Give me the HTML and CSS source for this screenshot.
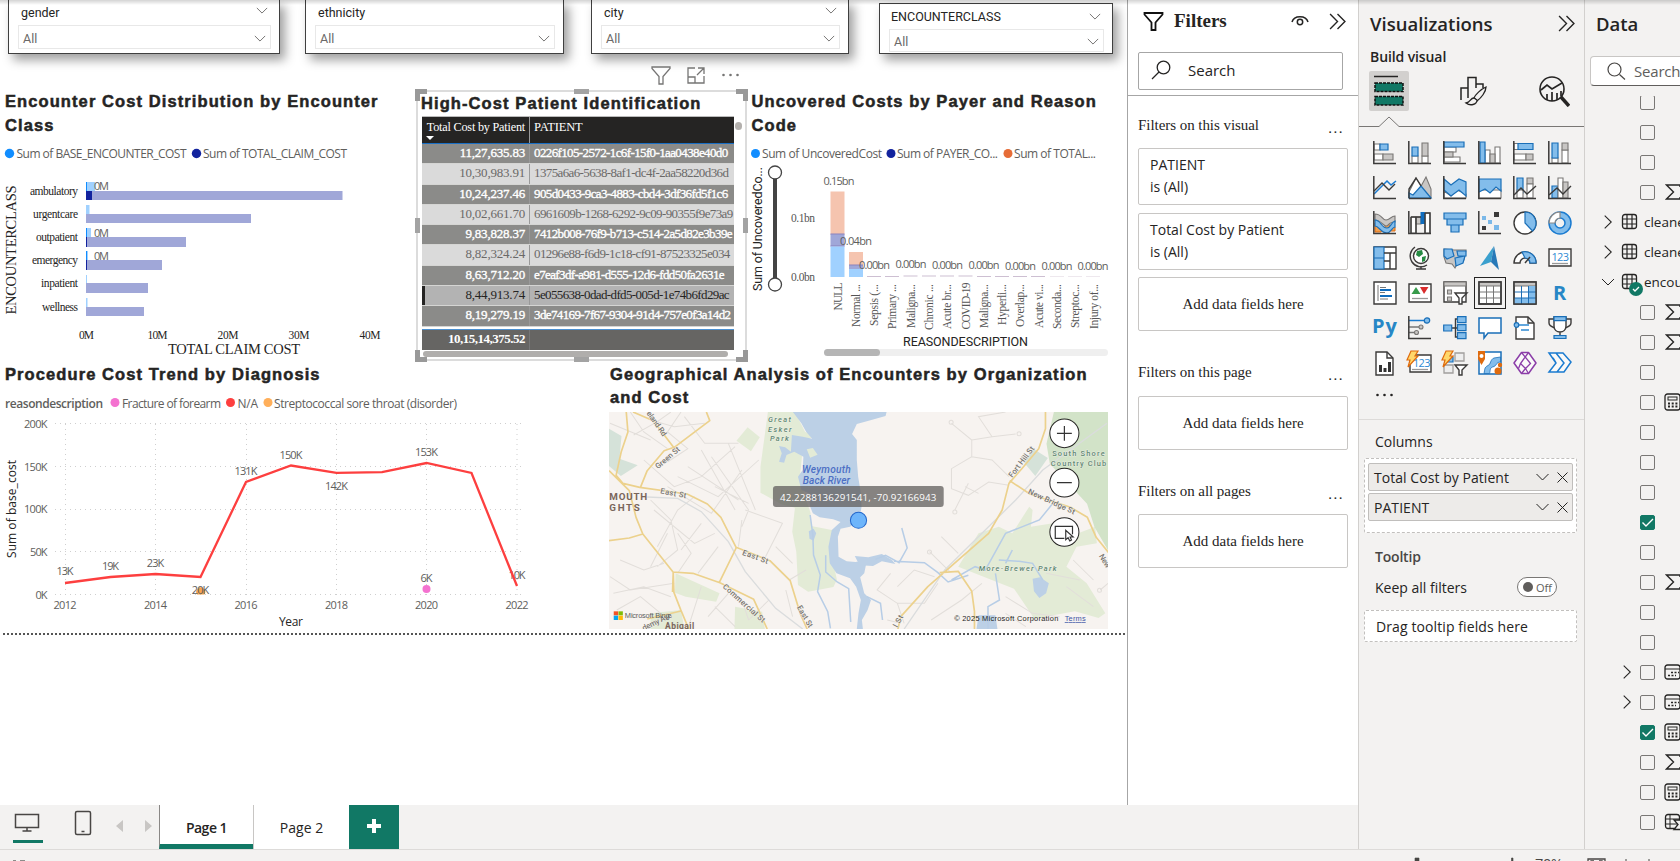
FILE: index.html
```html
<!DOCTYPE html>
<html lang="en">
<head>
<meta charset="utf-8">
<title>Report editor</title>
<link rel="stylesheet" href="styles.css">
</head>
<body>
<svg class="defs" width="0" height="0">
  <defs>
    <symbol id="chev" viewBox="0 0 14 8"><path d="M1 1l6 6 6-6" fill="none" stroke="currentColor"/></symbol>
    <symbol id="axes" viewBox="0 0 24 24"><path d="M.8 0v22.4H23" fill="none" stroke="#3b3a39" stroke-width="1.5"/></symbol>
    <symbol id="more" viewBox="0 0 20 4"><circle cx="2.5" cy="2" r="1.3"/><circle cx="9.5" cy="2" r="1.3"/><circle cx="16.500" cy="2" r="1.300"/></symbol>
    <symbol id="dbl" viewBox="0 0 16 16"><path d="M1 1l7 7-7 7M8 1l7 7-7 7" fill="none" stroke="#252423" stroke-width="1.3"/></symbol>
    <symbol id="funnel" viewBox="0 0 20 19"><path d="M1 1h18v1.500l-7 8v7.500H8v-7.500l-7-8z" fill="none" stroke="currentColor" stroke-width="var(--w)"/></symbol>
    <symbol id="sigma" viewBox="0 0 16 16"><path d="M15 3V1H1.500l7 7-7 7H15v-2" fill="none" stroke="#252423" stroke-width="1.400"/></symbol>
    <symbol id="calc" viewBox="0 0 18 18"><rect x="1" y="1" width="15" height="16" rx="2.500" fill="none" stroke="#252423" stroke-width="1.300"/><rect x="4" y="4" width="9" height="3" fill="none" stroke="#252423"/><path d="M4 10.500h10M4 13.500h10" stroke="#252423" stroke-width="1.800" stroke-dasharray="2 1.700"/></symbol>
    <symbol id="cal" viewBox="0 0 18 18"><rect x="1" y="2" width="15" height="14" rx="2.500" fill="none" stroke="#252423" stroke-width="1.300"/><path d="M1 6h15" stroke="#252423"/><path d="M7 9.500h8M4 12.500h8" stroke="#252423" stroke-width="1.500" stroke-dasharray="2 1.500"/></symbol>
    <symbol id="tbl" viewBox="0 0 18 18"><rect x="1.500" y="1.500" width="14" height="14" rx="2.500" fill="none" stroke="#252423" stroke-width="1.300"/><path d="M6 1.500v14M11 1.500v14M1.500 6h14M1.500 11h14" stroke="#252423" stroke-width="1.200"/></symbol>
    <symbol id="tsig" viewBox="0 0 18 18"><rect x="1.500" y="1.500" width="14" height="14" rx="2.500" fill="none" stroke="#252423" stroke-width="1.300"/><path d="M6 1.500v14M1.500 6h14M1.500 11h14" stroke="#252423"/><path d="M18 7h-8l4 4.500-4 5h8" fill="#f3f2f1" stroke="#252423" stroke-width="1.300"/></symbol>
    <symbol id="right" viewBox="0 0 8 14"><path d="M.7.7L7.300 7 .7 13.300" fill="none" stroke="#252423" stroke-width="1.100"/></symbol>
  </defs>
</svg>

<div class="app">
  <main class="report">
    <section class="slicers">
      <div class="slicer s1"><div class="slicer-head"><span>gender</span><svg class="chev"><use href="#chev"/></svg></div><div class="drop"><span>All</span><svg class="chev"><use href="#chev"/></svg></div></div>
      <div class="slicer s2"><div class="slicer-head"><span>ethnicity</span></div><div class="drop"><span>All</span><svg class="chev"><use href="#chev"/></svg></div></div>
      <div class="slicer s3"><div class="slicer-head"><span>city</span><svg class="chev"><use href="#chev"/></svg></div><div class="drop"><span>All</span><svg class="chev"><use href="#chev"/></svg></div></div>
      <div class="slicer s4"><div class="slicer-head"><span>ENCOUNTERCLASS</span><svg class="chev"><use href="#chev"/></svg></div><div class="drop"><span>All</span><svg class="chev"><use href="#chev"/></svg></div></div>
    </section>

    <section class="row-top">
      <article class="visual v-cost">
        <h2>Encounter Cost Distribution by Encounter Class</h2>
        <svg class="chart" width="411" height="223" viewBox="0 138 411 223">
          <g class="seg">
            <circle cx="9.500" cy="153.500" r="4.700" fill="#118dff"/><text x="16.500" y="158" textLength="170">Sum of BASE_ENCOUNTER_COST</text>
            <circle cx="196.500" cy="153.500" r="4.700" fill="#12239e"/><text x="203" y="158" textLength="144">Sum of TOTAL_CLAIM_COST</text>
          </g>
          <g fill="#a0d1ff"><rect x="86" y="182" width="9" height="9"/><rect x="86" y="205" width="3.500" height="9"/><rect x="86" y="228" width="5" height="9"/><rect x="86" y="251" width="2" height="9"/><rect x="86" y="275" width="1" height="9"/><rect x="86" y="298" width="1.500" height="9"/></g>
          <g fill="#a0a7d8"><rect x="86" y="191" width="256.500" height="9"/><rect x="86" y="214" width="165" height="9"/><rect x="86" y="237" width="100" height="10"/><rect x="86" y="260" width="76" height="10"/><rect x="86" y="283" width="62" height="10"/><rect x="86" y="307" width="58" height="9"/></g>
          <g fill="#118dff"><rect x="86" y="182" width="1" height="9"/><rect x="86" y="228" width="1" height="9"/><rect x="86" y="251" width="1" height="9"/></g>
          <g fill="#12239e"><rect x="86" y="191" width="6" height="9"/><rect x="86" y="237" width="1" height="10"/><rect x="86" y="260" width="1" height="10"/></g>
          <g class="seg lab"><text x="94" y="190" textLength="15">0M</text><text x="94" y="237" textLength="15">0M</text><text x="94" y="260" textLength="15">0M</text></g>
          <g class="tms" text-anchor="end">
            <text x="78" y="195" textLength="48">ambulatory</text><text x="78" y="218" textLength="45">urgentcare</text><text x="78" y="241" textLength="42">outpatient</text><text x="78" y="264" textLength="46">emergency</text><text x="78" y="287" textLength="37">inpatient</text><text x="78" y="311" textLength="36">wellness</text>
          </g>
          <g class="tms" text-anchor="middle"><text x="86.500" y="339" textLength="15">0M</text><text x="157.500" y="339" textLength="20">10M</text><text x="228" y="339" textLength="21">20M</text><text x="299" y="339" textLength="21">30M</text><text x="370" y="339" textLength="21">40M</text></g>
          <text class="tms big" x="168" y="354" textLength="132">TOTAL CLAIM COST</text>
          <text class="tms big" transform="translate(16 314.500) rotate(-90)" textLength="129">ENCOUNTERCLASS</text>
        </svg>
      </article>

      <article class="visual v-table">
        <div class="tools">
          <svg class="gray" width="20" height="19"><use href="#funnel"/></svg>
          <svg width="18" height="17" viewBox="0 0 18 17"><path d="M8 1H1v15h16V9M1 10h7v6M10 8l7-7M11 1h6v6" fill="none" stroke="#767574" stroke-width="1.300"/></svg>
          <svg class="dots" width="20" height="4"><use href="#more"/></svg>
        </div>
        <div class="frame">
          <i class="h tl"></i><i class="h tc"></i><i class="h tr"></i><i class="h ml"></i><i class="h mr"></i><i class="h bl"></i><i class="h bc"></i><i class="h br"></i><i class="knob"></i>
          <h2>High-Cost Patient Identification</h2>
          <div class="tb">
            <div class="tr head"><span>Total Cost by Patient<b></b></span><span>PATIENT</span></div>
            <div class="tr dk"><span>11,27,635.83</span><span>0226f105-2572-1c6f-15f0-1aa0438e40d0</span></div>
            <div class="tr lt"><span>10,30,983.91</span><span>1375a6a6-5638-8af1-dc4f-2aa58220d36d</span></div>
            <div class="tr dk"><span>10,24,237.46</span><span>905d0433-9ca3-4883-cbd4-3df36fd5f1c6</span></div>
            <div class="tr lt"><span>10,02,661.70</span><span>6961609b-1268-6292-9c09-90355f9e73a9</span></div>
            <div class="tr dk"><span>9,83,828.37</span><span>7412b008-76f9-b713-c514-2a5d82e3b39e</span></div>
            <div class="tr lt"><span>8,82,324.24</span><span>01296e88-f6d9-1c18-cf91-87523325e034</span></div>
            <div class="tr dk"><span>8,63,712.20</span><span>e7eaf3df-a981-d555-12d6-fdd50fa2631e</span></div>
            <div class="tr sel"><span>8,44,913.74</span><span>5e055638-0dad-dfd5-005d-1e74b6fd29ac</span></div>
            <div class="tr dk"><span>8,19,279.19</span><span>3de74169-7f67-9304-91d4-757e0f3a14d2</span></div>
            <div class="tr total"><span>10,15,14,375.52</span><span></span></div>
          </div>
          <div class="hscroll"></div>
        </div>
      </article>

      <article class="visual v-uncovered">
        <h2>Uncovered Costs by Payer and Reason Code</h2>
        <svg class="chart" width="377" height="223" viewBox="750 138 377 223">
          <g class="seg">
            <circle cx="755.500" cy="153.500" r="4.500" fill="#118dff"/><text x="762" y="158" textLength="120">Sum of UncoveredCost</text>
            <circle cx="891" cy="153.500" r="4.500" fill="#12239e"/><text x="897" y="158" textLength="101">Sum of PAYER_CO...</text>
            <circle cx="1008" cy="153.500" r="4.500" fill="#e66c37"/><text x="1014" y="158" textLength="82">Sum of TOTAL...</text>
          </g>
          <path d="M775 173v111" stroke="#444" stroke-width="4"/><g fill="#fff" stroke="#444" stroke-width="1.300"><circle cx="775" cy="172.500" r="6.500"/><circle cx="775" cy="284.500" r="6.500"/></g>
          <text class="din" transform="translate(761.500 291) rotate(-90)" textLength="124">Sum of UncoveredCo...</text>
          <g fill="#f5c4af"><rect x="830.500" y="191.500" width="14" height="43"/><rect x="849" y="252" width="14" height="13"/></g>
          <g fill="#a0a7d8"><rect x="830.500" y="234" width="14" height="12.500"/><rect x="849" y="265" width="14" height="4"/></g>
          <path d="M830.500 234h14M830.500 246h14M849 265h14" stroke="#8a83bd"/>
          <g fill="#a0d1ff"><rect x="830.500" y="246.500" width="14" height="30.500"/><rect x="849" y="269" width="14" height="8"/></g>
          <path d="M867 276.500h14M885 276.500h14M903.500 276h14M922 276h14M940 276h14M958.500 276h14M977 276.500h14M995 276.500h14M1013 276.500h14M1031 276.500h14" stroke="#cdbfd2" stroke-width="1"/><path d="M1050 276.500h14M1068 276.500h14M1086 276.500h14" stroke="#eee8ee"/>
          <g class="tms soft"><text x="791" y="222" textLength="24">0.1bn</text><text x="791" y="281" textLength="24">0.0bn</text></g>
          <g class="seg lab" text-anchor="middle"><text x="839" y="185" textLength="31">0.15bn</text><text x="856" y="245" textLength="32">0.04bn</text><text x="874.500" y="269" textLength="31">0.00bn</text><text x="911" y="268" textLength="31">0.00bn</text><text x="947.500" y="269" textLength="31">0.00bn</text><text x="984" y="269" textLength="31">0.00bn</text><text x="1020.500" y="270" textLength="31">0.00bn</text><text x="1057" y="270" textLength="31">0.00bn</text><text x="1093" y="270" textLength="31">0.00bn</text></g>
          <g class="tms soft cat" text-anchor="end">
            <text transform="translate(842 282.500) rotate(-90)" textLength="28">NULL</text><text transform="translate(860 284) rotate(-90)" textLength="43">Normal ...</text><text transform="translate(878 284) rotate(-90)" textLength="42">Sepsis (...</text><text transform="translate(896 284) rotate(-90)" textLength="45">Primary ...</text><text transform="translate(915 284) rotate(-90)" textLength="44">Maligna...</text><text transform="translate(933 284) rotate(-90)" textLength="46">Chronic ...</text><text transform="translate(951 284) rotate(-90)" textLength="45">Acute br...</text><text transform="translate(970 282.500) rotate(-90)" textLength="47">COVID-19</text><text transform="translate(988 284) rotate(-90)" textLength="44">Maligna...</text><text transform="translate(1006 284) rotate(-90)" textLength="41">Hyperli...</text><text transform="translate(1024 284) rotate(-90)" textLength="43">Overlap...</text><text transform="translate(1043 284) rotate(-90)" textLength="44">Acute vi...</text><text transform="translate(1061 284) rotate(-90)" textLength="45">Seconda...</text><text transform="translate(1079 284) rotate(-90)" textLength="44">Streptoc...</text><text transform="translate(1098 284) rotate(-90)" textLength="45">Injury of...</text>
          </g>
          <text class="din" x="903" y="346" textLength="125">REASONDESCRIPTION</text>
          <rect x="824" y="349" width="284" height="7" rx="3.500" fill="#efefef"/><rect x="824" y="349" width="56" height="7" rx="3.500" fill="#b5b5b5"/>
        </svg>
      </article>
    </section>

    <section class="row-bottom">
      <article class="visual v-trend">
        <h2>Procedure Cost Trend by Diagnosis</h2>
        <svg class="chart" width="600" height="245" viewBox="0 388 600 245">
          <g class="seg">
            <text x="5" y="407.500" font-weight="600" textLength="98">reasondescription</text>
            <circle cx="115" cy="402.500" r="4.500" fill="#f472d0"/><text x="122" y="407.500" textLength="99">Fracture of forearm</text>
            <circle cx="230.500" cy="402.500" r="4.500" fill="#fd3f3f"/><text x="237.500" y="407.500" textLength="20.500">N/A</text>
            <circle cx="268" cy="402.500" r="4.500" fill="#ffaf5a"/><text x="274" y="407.500" textLength="183">Streptococcal sore throat (disorder)</text>
          </g>
          <path d="M55 423.500h470M55 466.500h470M55 509.500h470M55 551.500h470M55 594.500h470M65.500 424v171M155.500 424v171M246.500 424v171M336.500 424v171M426.500 424v171M517 424v171" fill="none" stroke="#cfcfcf" stroke-dasharray="1 4"/>
          <g class="seg lab" text-anchor="end"><text x="47.500" y="427.500" textLength="23.500">200K</text><text x="47.500" y="470.500" textLength="23.500">150K</text><text x="47.500" y="513" textLength="23.500">100K</text><text x="47.500" y="556" textLength="17.500">50K</text><text x="47.500" y="598.500" textLength="12">0K</text></g>
          <path d="M197 594.500a4.500 4.500 0 1 1 7.500 0z" fill="#f9a64d"/>
          <circle cx="426.500" cy="589" r="4" fill="#f472d0"/>
          <g class="seg lab" text-anchor="middle"><text x="65" y="608.500" textLength="23">2012</text><text x="155.500" y="608.500" textLength="23">2014</text><text x="246" y="608.500" textLength="23">2016</text><text x="336.500" y="608.500" textLength="23">2018</text><text x="426.500" y="608.500" textLength="23">2020</text><text x="517" y="608.500" textLength="23">2022</text>
            <text x="65" y="574.500" textLength="17">13K</text><text x="110.500" y="569.500" textLength="17">19K</text><text x="155.500" y="566.500" textLength="17.500">23K</text><text x="200.500" y="593.500" textLength="17.500">20K</text><text x="246" y="474.500" textLength="23">131K</text><text x="291" y="458.500" textLength="23">150K</text><text x="336.500" y="489.500" textLength="23">142K</text><text x="426.500" y="455.500" textLength="23">153K</text><text x="426.500" y="581.500" textLength="12">6K</text><text x="517" y="578.500" textLength="17">10K</text></g>
          <path d="M65 583l45.500-6 45-3 45 3L246 482l45-16.500 45.500 7.300 45.500-.6 44.500-9.200 45 10L517 586" fill="none" stroke="#fd3f3f" stroke-width="2.300"/>
          <text class="seg dark" x="279" y="626" textLength="24">Year</text>
          <text class="seg dark" transform="translate(16 558) rotate(-90)" textLength="98">Sum of base_cost</text>
        </svg>
      </article>
      <article class="visual v-map">
        <h2>Geographical Analysis of Encounters by Organization and Cost</h2>
        <svg class="map" width="499" height="217" viewBox="27 156 1476 651" preserveAspectRatio="none">
          <rect x="27" y="156" width="1476" height="651" fill="#f7f3f0"/>
          <g fill="#e3ebd6">
            <path d="M497 156h80l30 60 35 10-25 12-40-10-5 40 26 20-5 50 10 60 20 60 2 40 80 16-24 45 20 100-10 22-75 14-30-20-5-100-12-60 8-72-40-10-62-35V320l8-60z"/>
            <path d="M437 202l36 30-26 42-43-32z"/>
            <path d="M1060 620l60-100 60-20 40 20 50-80 10 10-5 50 65-10 40 20 35 10 50-20 5 50-60 10-30 60 60 50 55 90-20 14-70-20-120 22-60-90zM224 640l130 60-10 25-90-15-32-12zM400 740l80 15 8 52h-90zM150 760l90-10 10 57H150z"/>
          </g>
          <path d="M1343 156h160v415l-40-70-22-70-110-120-10-60z" fill="#d2e3c8"/>
          <g fill="#d5e2d9"><path d="M1282 266l43 28-37 54-35-42zM27 206l37 22-6 68 54 20-50 32-35-30z"/></g>
          <g fill="#bcd0e6">
            <path d="M571 156H848L845 168L795 182L760 192L746 222L760 240V300L764 350L772 400L774 440L768 478L740 500L712 506L704 530L706 590L730 604L756 606L790 600L782 640L770 652L782 700L802 720L792 750L775 780L778 807H760L765 760L772 720L758 680L740 655L700 640L680 610L676 560L686 510L712 486L690 478L650 472L630 460L622 440L618 400L596 390L586 350L600 330L602 290L575 275L552 285L545 308L530 305L538 280L530 258L548 262L565 275L568 225L600 230L628 236L610 215L596 190Z"/>
            <path d="M754 588l40 4 40-10 30 18 10 12-40-8-26 14-40-2zM618 514l14-8 8 14-8 22-12-6zM1280 656l22-4 26 18-8 30-20 14-16-20zM1120 766h50l6 41h-62z"/>
          </g>
          <path d="M612 268l18-4 14 20-22 9z" fill="#e3ebd6"/>
          <g fill="none" stroke="#b7cde6" stroke-width="4.500"><path d="M622 465l8 60 2 60 20 60-8 50 30 60 8 50M668 586v50l34 30 34 20 6 100M893 504l16 60-24 44-40-22-30 12M870 604l90 4 40 30 30 28 60-20M1040 660l70-40 30 10 60-110 100-40 40-50M1200 610l20-40M1180 600l60 4 40 6 30 50M1170 640l12 80-34 20v67M790 710l40 20 6 50"/></g>
          <g fill="none" stroke="#e2deda" stroke-width="3">
            <path d="M90 156l40 60 70 50M240 156l-40 60 60 50-60 40M100 225l70-40 40-29M150 180l70 20 90-10M250 170l60 80 100 0M30 190l120 50M130 300l90 80 80-30 100-90M230 350l120 60 120-110M260 320l150 100M200 380l130 80 90-130M340 380l100 50M330 290l110 160M300 270l100 180M380 250l80 200M280 410l-50 40-60 110M150 420l60 60 20 90-60 50M160 450l120 100 60-30M200 520l-50 100M60 600l70 30 60-20M30 650l60 40 130-20M40 700l90-20 80 30M50 750l70-40 60 50M230 520l40 60-40 60M300 490l-60 80M420 480l-10 80M430 450l110 40-50 100M440 450l-20 50M350 560l-60 80M500 600l60 60 50-30M300 680l-40 127M380 700l-60 70M340 740l60 60M420 720l20 60M500 720l-60 60M550 690l20 80M520 560l50 50"/>
            <path d="M1040 190l60 50v50l-60 36v60l50 20 60-40 60 10M1100 240l60-10 70-8M1100 290l60 10 50 50M1160 230l-40-60 80-14M1090 370l-40 80M1120 400l-40-20M860 640l-40 50 60 40 80 0 40-60M880 680l50-50 60 20M975 575l60 60M1010 530l50 50M980 780l90-60 60-50M880 730l20 60M1200 710l80 50 80 10M1200 760l60 40M1480 690l23-20M1400 600l60 60M850 780l40 10M1320 640l100 20M1380 680l80 60"/>
            <circle cx="1039" cy="187" r="6"/><circle cx="1240" cy="221" r="6"/><circle cx="1050" cy="456" r="6"/><circle cx="1478" cy="691" r="6"/><circle cx="975" cy="576" r="6"/>
          </g>
          <path d="M140 411l90 4 70 40 80 90 50 90 90 110 80 62M1500 190l-190 140-80 90-210 210-120 177" fill="none" stroke="#dadcdd" stroke-width="4"/>
          <g fill="none" stroke="#ecd18c" stroke-width="5" stroke-linejoin="round">
            <path d="M78 156l5 60-20 60-15 70 20 24 50 12 140 20 60 30 40 40 45 90 100 40 60 60 30 100 40 90M27 332l60 60 20 80 20 50 90 115 2 60 20 52 24 58M27 542l60-8 40-12M215 636l60 4 80 28 100 50 40 89M353 668l50-104M120 382l20-50 50-60 30-10 105-80-10-26M218 262l-60-80-60-26M140 777l100-24M217 636l-2 60M1318 156v50l-20 60-50 60-38 44-20 80-40 70-180 160-80 90-22 97M1212 362l60 40 120 40 50 30 26 60 40 50M1005 638l55-4 40 60 8 60v53"/>
          </g>
          <g class="road" fill="#77756f">
            <text transform="translate(137 160) rotate(55)" textLength="86">eland Rd</text><text transform="translate(172 328) rotate(-41)" textLength="88">Green St</text><text transform="translate(178 400) rotate(11)" textLength="78">East St</text><text transform="translate(420 584) rotate(20)" textLength="80">East St</text><text transform="translate(362 682) rotate(42)" textLength="160">Commercial St</text><text transform="translate(582 742) rotate(60)" textLength="72">East St</text><text transform="translate(1220 354) rotate(-53)" textLength="110">Fort Hill St</text><text transform="translate(1265 400) rotate(25)" textLength="150">New Bridge St</text><text transform="translate(1476 588) rotate(60)" textLength="44">New</text><text transform="translate(880 804) rotate(-62)" textLength="38">l St</text><text transform="translate(130 812) rotate(-26)" textLength="94">demy Ave</text>
          </g>
          <g class="park" fill="#5c8770"><text x="497" y="186" textLength="68">Great</text><text x="497" y="215" textLength="70">Esker</text><text x="503" y="243" textLength="56">Park</text><text x="1121" y="632" textLength="230">More-Brewer Park</text></g>
          <g class="club" fill="#5c8770"><text x="1338" y="289" textLength="155">South Shore</text><text x="1334" y="318" textLength="164">Country Club</text></g>
          <g class="water" fill="#4c6fc4"><text x="598" y="338" textLength="144">Weymouth</text><text x="600" y="372" textLength="140">Back River</text></g>
          <g class="town" fill="#79655b"><text x="28" y="419" textLength="112">MOUTH</text><text x="28" y="454" textLength="90">GHTS</text><text class="small" x="193" y="807" textLength="86">Abigail</text></g>
          <rect x="512" y="378" width="505" height="63" rx="9" fill="#605e5c" fill-opacity=".75"/>
          <text class="pin" x="533" y="422" textLength="462">42.2288136291541, -70.92166943</text>
          <circle cx="765" cy="481" r="24" fill="#6eb5fb" stroke="#2468cc" stroke-width="3"/>
          <g fill="#fff" stroke="#252423" stroke-width="3"><circle cx="1374" cy="220" r="43"/><circle cx="1374" cy="368" r="43"/><circle cx="1374" cy="516" r="43"/></g>
          <g fill="none" stroke="#333" stroke-width="3.500"><path d="M1352 220h44M1374 198v44M1352 368h44"/><path d="M1374 535h-27v-36h51v24"/><path d="M1378 511v28l7-6 5 10 5-3-4-9h9z" fill="#fff"/></g>
          <path d="M41 754h13v12H41z" fill="#f35325"/><path d="M55 754h13v12H55z" fill="#81bc06"/><path d="M41 767h13v13H41z" fill="#05a6f0"/><path d="M55 767h13v13H55z" fill="#ffba08"/>
          <g class="note"><text x="74" y="774" textLength="132" fill="#60615f">Microsoft Bing</text><text x="1048" y="783" textLength="308" fill="#252423">© 2025 Microsoft Corporation</text><text x="1375" y="783" textLength="62" fill="#3d56a6" text-decoration="underline">Terms</text></g>
        </svg>
      </article>
    </section>
    <div class="page-edge"></div>
  </main>

  <aside class="filters">
    <header><svg class="fun" width="21" height="19"><use href="#funnel"/></svg><h3>Filters</h3>
      <svg class="eye" width="18" height="12" viewBox="0 0 18 12"><path d="M1 7c2-7 14-7 16 0" fill="none" stroke="#252423" stroke-width="1.500"/><circle cx="9" cy="7" r="2.700" fill="none" stroke="#252423" stroke-width="1.500"/></svg>
      <svg width="17" height="17"><use href="#dbl"/></svg></header>
    <div class="fsearch"><svg width="20" height="20" viewBox="0 0 20 20"><circle cx="12.500" cy="7.500" r="6.300" fill="none" stroke="#252423" stroke-width="1.300"/><path d="M8 12l-7 7" stroke="#252423" stroke-width="1.300"/></svg><span>Search</span></div>
    <div class="fbody">
      <div class="fh"><span>Filters on this visual</span><i>...</i></div>
      <div class="card"><p>PATIENT</p><p>is (All)</p></div>
      <div class="card"><p>Total Cost by Patient</p><p>is (All)</p></div>
      <div class="card add">Add data fields here</div>
      <div class="fh"><span>Filters on this page</span><i>...</i></div>
      <div class="card add">Add data fields here</div>
      <div class="fh"><span>Filters on all pages</span><i>...</i></div>
      <div class="card add">Add data fields here</div>
    </div>
  </aside>

  <nav class="tabs">
    <span class="dev on"><svg width="26" height="20" viewBox="0 0 26 20"><path d="M1.500 1.500h23v13h-23zM13 14.500v3M8.500 18h9" fill="none" stroke="#484644" stroke-width="1.500"/></svg></span>
    <span class="dev ph"><svg width="18" height="26" viewBox="0 0 18 26"><rect x="1.500" y="1.500" width="15" height="23" rx="1.500" fill="none" stroke="#484644" stroke-width="1.500"/><path d="M7.500 21.500h3" stroke="#484644" stroke-width="1.500"/></svg></span>
    <svg class="arr" width="36" height="12" viewBox="0 0 36 12"><path d="M7 0v12L0 6zM29 0v12l7-6z" fill="#c8c6c4"/></svg>
    <span class="tab cur">Page 1</span><span class="tab">Page 2</span>
    <span class="addp"><svg width="14" height="14" viewBox="0 0 14 14"><path d="M7 0v14M0 7h14" stroke="#fff" stroke-width="4"/></svg></span>
  </nav>

  <aside class="viz">
    <header><h3>Visualizations</h3><svg width="17" height="17"><use href="#dbl"/></svg></header>
    <p class="build">Build visual</p>
    <div class="modes">
      <span class="mode on"><svg width="30" height="32" viewBox="0 0 30 32"><path d="M0 1.500h24" stroke="#252423" stroke-width="1.500"/><g fill="#117865" stroke="#111" stroke-width="1.500" stroke-dasharray="3 1"><rect x="1" y="8" width="28" height="8.500"/><rect x="1" y="21.500" width="28" height="8.500"/></g></svg></span>
      <span class="mode"><svg width="30" height="30" viewBox="0 0 30 30"><path d="M2 24V12h7V1.500h8V12M17 8h7v4M9 12v10" fill="none" stroke="#252423" stroke-width="1.500"/><path d="M27 11c-5 2-11 8-12 11l3 3c4-3 9-9 9-14z" fill="#f3f2f1" stroke="#252423" stroke-width="1.300"/><path d="M15 22c-4 0-3 4-8 5 4 3 11 2 11-3z" fill="#f3f2f1" stroke="#252423" stroke-width="1.300"/></svg></span>
      <span class="mode"><svg width="31" height="31" viewBox="0 0 31 31"><circle cx="13" cy="13" r="12" fill="none" stroke="#252423" stroke-width="1.600"/><path d="M2 14l6-5 5 4 10-6M8 24v-6M13 25V16M18 24v-7M22 20v-5" fill="none" stroke="#252423" stroke-width="1.700"/><path d="M22 21l8 9" stroke="#252423" stroke-width="3.500"/></svg></span>
    </div>
    <svg class="notch" width="225" height="12" viewBox="0 0 225 12"><path d="M0 10.500h20l10-9.500 10 9.500h185" fill="none" stroke="#797775" stroke-width="1"/></svg>
    <div class="gallery">
      <svg viewBox="0 0 24 24"><path class="w" d="M1 3h6v6H1zM1 13h9v6H1z"/><path class="b" d="M7 3h8v6H7z"/><path class="g" d="M10 13h10v6H10z"/><use href="#axes"/></svg>
      <svg viewBox="0 0 24 24"><path class="w" d="M4 15h6v7H4zM14 15h6v7h-6z"/><path class="b" d="M4 6h6v9H4z"/><path class="g" d="M14 2h6v13h-6z"/><use href="#axes"/></svg>
      <svg viewBox="0 0 24 24"><path class="w" d="M1 6h12v5H1zM1 16h16v5H1z"/><path class="g" d="M1 11h9v5H1z"/><path class="b" d="M1 1h20v5H1z"/><use href="#axes"/></svg>
      <svg viewBox="0 0 24 24"><path class="w" d="M7 9h5v13H7zM17 6h5v16h-5z"/><path class="g" d="M12 13h5v9h-5z"/><path class="b" d="M2 1h5v21H2z"/><use href="#axes"/></svg>
      <svg viewBox="0 0 24 24"><path class="w" d="M1 2.500h5v6H1zM1 13h12v6H1z"/><path class="b" d="M5 2.500h15v6H5z"/><path class="g" d="M13 13h7v6h-7z"/><use href="#axes"/></svg>
      <svg viewBox="0 0 24 24"><path class="w" d="M4 17h6v5H4zM14 9h6v13h-6z"/><path class="b" d="M4 2h6v15H4z"/><path class="g" d="M14 2h6v7h-6z"/><use href="#axes"/></svg>

      <svg viewBox="0 0 24 24"><path class="l" d="M1 18L14 5l4 4 5-4"/><path class="k" d="M1 15l8-8 7 7 6-6" /><use href="#axes"/></svg>
      <svg viewBox="0 0 24 24"><path class="w" d="M1 16L8 2l8 12-8 8H1z"/><path class="g" d="M11 14l7-13 5 12v9H11z"/><path class="b" d="M1 22v-5l4 2 8-9 10 12z"/><path class="k" d="M1 22V13L8 2l5 8M1 22.500h22"/></svg>
      <svg viewBox="0 0 24 24"><path class="w" d="M1 15l7 5 6-6 9 4v4H1z"/><path class="b" d="M1 3l7 6 8-6 7 3v14l-7-6-8 6-7-6z"/><use href="#axes"/></svg>
      <svg viewBox="0 0 24 24"><path class="w" d="M1 14h22v8H1z"/><path class="b" d="M1 3h22v12l-5-4-6 6-5-4-6 3z"/><use href="#axes"/></svg>
      <svg viewBox="0 0 24 24"><path class="b" d="M4 2h6v15H4z"/><path class="g" d="M14 2h6v6h-6z"/><path class="w" d="M4 14h6v8H4zM14 8h6v14h-6z"/><path class="k" d="M1 19l7-7 6 6 9-8"/><use href="#axes"/></svg>
      <svg viewBox="0 0 24 24"><path class="b" d="M4 10h6v12H4z"/><path class="w" d="M10 2h5v20h-5z"/><path class="g" d="M15 6h5v16h-5z"/><path class="k" d="M1 19l8-7 6 6 8-8"/><use href="#axes"/></svg>

      <svg viewBox="0 0 24 24"><path class="o" d="M2 12h4l6 8h10v-4l-8-3-6 8H2z"/><path class="g" d="M2 3c7 0 7 6 11 6s5-4 9-4v6c-7 0-6 4-9 4S8 9 2 9z"/><path class="b" d="M2 9c6 0 6 8 12 8 4 0 4-6 8-7v6c-3 0-4 6-8 6-6 0-8-7-12-7z"/><use href="#axes"/></svg>
      <svg viewBox="0 0 24 24"><path class="w" d="M3 6h5v16H3zM17 2h5v20h-5z"/><path class="g" d="M8 6h5v7H8z"/><path d="M12.500 1h4.500v12h-4.500z" fill="#0f6cbd"/><path class="k" d="M3 6h10M3 6v16M8 6v16M17 2h5v20M17 2v20"/><use href="#axes"/></svg>
      <svg viewBox="0 0 24 24"><path class="b" d="M1 2h22v6H1zM4 8h16v6H4zM8 14h8v7H8z"/></svg>
      <svg viewBox="0 0 24 24"><path fill="#3b3a39" d="M16 1h5v5h-5zM4 15h4v4H4z"/><path fill="#7ab8e8" d="M4 5h4v4H4zM10 9h4v4h-4zM16 14h5v5h-5z"/><use href="#axes"/></svg>
      <svg viewBox="0 0 24 24"><circle class="wk" cx="12" cy="12" r="11"/><path class="b" d="M12 1a11 11 0 0 1 7.500 19L12 12z"/></svg>
      <svg viewBox="0 0 24 24"><circle cx="12" cy="12" r="8" fill="none" stroke="#83bdeb" stroke-width="6"/><path d="M4 12a8 8 0 0 1 8-8" fill="none" stroke="#fff" stroke-width="5"/><circle class="l" cx="12" cy="12" r="11"/><circle class="l" cx="12" cy="12" r="5"/><path class="gk" d="M1 12A11 11 0 0 1 12 1v6a5 5 0 0 0-5 5z"/></svg>

      <svg viewBox="0 0 24 24"><path class="wk" d="M1 1h22v22H1z"/><path class="b" d="M1 1h10v11H1zM1 12h10v11H1z"/><path class="k" d="M11 7h12M11 15h6M17 7v16"/></svg>
      <svg viewBox="0 0 24 24"><circle class="wk" cx="13" cy="10" r="7.500"/><path d="M9 5l5-1 1 4-4 3-3-2zM14 11l4-1-1 5-3 1z" fill="#268b43"/><path class="k" d="M7 1a10 10 0 0 0 12 18M13 20v3M8 23h10"/></svg>
      <svg viewBox="0 0 24 24"><path class="g" d="M1 3l10 1h12l-2 10-7 4-2 4-3-4-6-1-2-6z"/><path class="b" d="M1 3h8l2 7-7 3-3-3zM14 5h9v5h-8zM12 12l10-2-2 7-7 3z"/></svg>
      <svg viewBox="0 0 24 24"><path d="M16 0L2 20l11-4z" fill="#3aa0ce"/><path d="M16 0l5 24-8-8z" fill="#2779b8"/></svg>
      <svg viewBox="0 0 24 24"><path class="wk" d="M1 17a11 11 0 0 1 22 0h-6a5 5 0 0 0-10 0z"/><path class="b" d="M9 6a11 11 0 0 1 14 11h-6a5 5 0 0 0-5-5z"/><path class="k" d="M12 17l5-6" /></svg>
      <svg viewBox="0 0 24 24"><path class="wk" d="M1 3h22v17H1z"/><path d="M4 17.500h16" stroke="#999" stroke-width="1.300"/><text x="3.500" y="14.500" class="num">123</text></svg>

      <svg viewBox="0 0 24 24"><path class="wk" d="M1 1h22v22H1z"/><path d="M5 4v16M7 6.500h6M7 11.500h5M7 18h8" stroke="#777"/><path d="M7 9h11M7 15h12" stroke="#0f6cbd" stroke-width="2"/></svg>
      <svg viewBox="0 0 24 24"><path class="wk" d="M1 3h22v18H1z"/><path d="M4 17.500h16" stroke="#999" stroke-width="1.300"/><path d="M3.500 13L8 6l4.500 7z" fill="#379b4b"/><path d="M12 6h8.500L16 13z" fill="#d92c2c"/></svg>
      <svg viewBox="0 0 24 24"><path class="wk" d="M1 1h22v20H1z"/><path class="g" d="M1 1h22v4H1z"/><path d="M4.500 9h4v4h-4zM4.500 16h4v4h-4z" class="g"/><path class="wk" d="M12 12h12l-5 5v6h-3v-6z"/></svg>
      <svg class="picked" viewBox="0 0 24 24"><path class="wk" d="M1 1h22v22H1z"/><path class="g" d="M1 1h22v4H1z"/><path d="M8.500 5v18M15.500 5v18M1 11h22M1 17h22" stroke="#777"/><path class="k" d="M1 1h22v22H1z"/></svg>
      <svg viewBox="0 0 24 24"><path class="wk" d="M1 1h22v22H1z"/><path class="g" d="M1 1h22v4H1z"/><path fill="#83bdeb" d="M15 5h8v18H1v-6h14z"/><path d="M8.500 5v18M15.500 5v18M1 11h22M1 17h22" stroke="#1f6fb5"/><path class="k" d="M1 1h22v22H1z"/></svg>
      <svg viewBox="0 0 24 24"><text x="5" y="19" class="lang" textLength="12">R</text></svg>

      <svg viewBox="0 0 24 24"><text x="-1" y="17" class="lang" textLength="25">Py</text></svg>
      <svg viewBox="0 0 24 24"><path class="l" d="M1 4.500h15"/><circle class="b" cx="19" cy="4.500" r="2.700"/><path d="M1 11h10M1 16.500h6" stroke="#777" stroke-width="1.500"/><circle cx="13" cy="11" r="2" class="g"/><circle cx="8.500" cy="16.500" r="2" class="g"/><use href="#axes"/></svg>
      <svg viewBox="0 0 24 24"><path class="k" d="M9 12h6M15 3h-2.500v18H15"/><path class="b" d="M.7 9h8v6h-8zM14.500.7h8.500v6h-8.500zM14.500 8.700h8.500v6h-8.500zM14.500 16.700h8.500v6h-8.500z"/></svg>
      <svg viewBox="0 0 24 24"><path d="M1 2h22v15H10l-4 5v-5H1z" fill="#fff" stroke="#1a6fb8" stroke-width="1.500"/></svg>
      <svg viewBox="0 0 24 24"><path class="wk" d="M3 1h12l6 6v16H3z"/><path class="k" d="M15 1v6h6"/><path d="M6 9h10M8 14h8" stroke="#2f8ad3" stroke-width="1.500"/><circle cx="3.500" cy="9" r="2.300" class="b"/></svg>
      <svg viewBox="0 0 24 24"><path class="k" d="M6 3H1v4c0 3 3 4 6 5M18 3h5v4c0 3-3 4-6 5"/><path class="wk" d="M6 1h12v9c0 4-3 6-6 6s-6-2-6-6zM12 16v4"/><path class="b" d="M6 .7h12v4H6zM6 19.500h12v3H6z"/></svg>

      <svg viewBox="0 0 24 24"><path class="wk" d="M3 1h11l6 6v17H3z"/><path class="k" d="M14 1v6h6"/><path d="M6 14h3v7H6zM10.500 17h3v4h-3zM15 11h3v10h-3z" fill="#333"/></svg>
      <svg viewBox="0 0 24 24"><path class="wk" d="M2 4h21v17H2z"/><path d="M4 18.500h16" stroke="#999" stroke-width="1.300"/><text x="5" y="16" class="num">123</text><path class="z" d="M3 0h7L7 5h3L0 16l2-7h-3z"/></svg>
      <svg viewBox="0 0 24 24"><path class="g2" d="M12 2h9v8h-9zM1 14h9v8H1z"/><path class="b" d="M4 6h6v5H4z"/><path class="z" d="M3 0h7L7 5h3L0 16l2-7h-3z"/><path class="wk" d="M12 14h12l-5 5v5h-3v-5z"/></svg>
      <svg viewBox="0 0 24 24"><path d="M1 1h22v22H1z" fill="#fff" stroke="#1a6fb8" stroke-width="1.500"/><path d="M22.500 6v5c-5 0-3 4-8 5-3 1-2 4-3 6.500H6c1-4 0-6 4-8 3-1 2-6 6-7.500z" fill="#83bdeb" stroke="#1a6fb8" stroke-width=".8"/><path d="M3.500 14L0 8V0h7v8z" fill="#df6b0e"/><circle cx="3.500" cy="5" r="2" fill="#fff"/><circle cx="20" cy="20" r="3.500" fill="#df6b0e"/><circle cx="22" cy="14" r="2.200" fill="#df6b0e"/></svg>
      <svg viewBox="0 0 24 24"><path d="M8.500 1.500h7l7.500 10.500-7.500 10.500h-7L1 12z" fill="#fff" fill-opacity=".6" stroke="#8b3da8" stroke-width="1.500" stroke-linejoin="round"/><path d="M8.500 1.500l9 11-5 5-5-5 8-11M12.500 17.500l-4 5M12.500 17.500l3 5M7.500 12.500l-2 5" fill="none" stroke="#8b3da8" stroke-width="1.300"/></svg>
      <svg viewBox="0 0 24 24"><path d="M1 2h14l8 9-7 10H1l7-9zM8 2l8 10-7 9M5 7l3 5" fill="#fff" fill-opacity=".5" stroke="#1a7bd0" stroke-width="1.500"/></svg>
    </div>
    <svg class="gm" width="20" height="4"><use href="#more"/></svg>
    <div class="wells">
      <p class="wl">Columns</p>
      <div class="well"><div class="fld"><span>Total Cost by Patient</span><svg class="c" width="15" height="8"><use href="#chev"/></svg><svg width="11" height="11" viewBox="0 0 11 11"><path d="M.5.5l10 10M10.500.5l-10 10" stroke="#252423"/></svg></div><div class="fld"><span>PATIENT</span><svg class="c" width="15" height="8"><use href="#chev"/></svg><svg width="11" height="11" viewBox="0 0 11 11"><path d="M.5.5l10 10M10.500.5l-10 10" stroke="#252423"/></svg></div></div>
      <p class="wl tt">Tooltip</p>
      <div class="keep"><span>Keep all filters</span><span class="tog"><i></i>Off</span></div>
      <div class="well drag">Drag tooltip fields here</div>
    </div>
  </aside>

  <aside class="data">
    <h3>Data</h3>
    <div class="dsearch"><svg width="19" height="19" viewBox="0 0 19 19"><circle cx="7.500" cy="7.500" r="6.500" fill="none" stroke="#484644" stroke-width="1.200"/><path d="M12.500 12.500l5.500 5" stroke="#484644" stroke-width="1.200"/></svg><span>Search</span></div>
    <div class="list">
      <div class="it"><b class="cb"></b></div>
      <div class="it"><b class="cb"></b></div>
      <div class="it"><b class="cb"></b></div>
      <div class="it"><b class="cb"></b><svg class="sg"><use href="#sigma"/></svg></div>
      <div class="it t"><svg class="r"><use href="#right"/></svg><svg class="ti"><use href="#tbl"/></svg><span>cleaned</span></div>
      <div class="it t"><svg class="r"><use href="#right"/></svg><svg class="ti"><use href="#tbl"/></svg><span>cleaned</span></div>
      <div class="it t open"><svg class="dn"><use href="#chev"/></svg><svg class="ti"><use href="#tbl"/></svg><svg class="badge" viewBox="0 0 14 14"><circle cx="7" cy="7" r="7" fill="#117865"/><path d="M4 7l2 2 4-4" fill="none" stroke="#fff" stroke-width="1.300"/></svg><span>encounters</span></div>
      <div class="it"><b class="cb"></b><svg class="sg"><use href="#sigma"/></svg></div>
      <div class="it"><b class="cb"></b><svg class="sg"><use href="#sigma"/></svg></div>
      <div class="it"><b class="cb"></b></div>
      <div class="it"><b class="cb"></b><svg class="ic"><use href="#calc"/></svg></div>
      <div class="it"><b class="cb"></b></div>
      <div class="it"><b class="cb"></b></div>
      <div class="it"><b class="cb"></b></div>
      <div class="it"><b class="cb y"><svg viewBox="0 0 13 13"><path d="M1.500 6.500L5 10l7-7" fill="none" stroke="#fff" stroke-width="1.400"/></svg></b></div>
      <div class="it"><b class="cb"></b></div>
      <div class="it"><b class="cb"></b><svg class="sg"><use href="#sigma"/></svg></div>
      <div class="it"><b class="cb"></b></div>
      <div class="it"><b class="cb"></b></div>
      <div class="it ex"><svg class="r"><use href="#right"/></svg><b class="cb"></b><svg class="ic"><use href="#cal"/></svg></div>
      <div class="it ex"><svg class="r"><use href="#right"/></svg><b class="cb"></b><svg class="ic"><use href="#cal"/></svg></div>
      <div class="it"><b class="cb y"><svg viewBox="0 0 13 13"><path d="M1.500 6.500L5 10l7-7" fill="none" stroke="#fff" stroke-width="1.400"/></svg></b><svg class="ic"><use href="#calc"/></svg></div>
      <div class="it"><b class="cb"></b><svg class="sg"><use href="#sigma"/></svg></div>
      <div class="it"><b class="cb"></b><svg class="ic"><use href="#calc"/></svg></div>
      <div class="it"><b class="cb"></b><svg class="ic"><use href="#tsig"/></svg></div>
    </div>
  </aside>

  <footer class="status"><svg width="1680" height="11" viewBox="0 850 1680 11"><path d="M13 860.500h3M20 860.500h5M1415 858h4v3h-4zM1511.500 858h1.500v3h-1.500z" fill="#484644" stroke="#484644" stroke-width=".6"/><path d="M1588 862v-3h17v3M1591 862v-1h3M1602 862v-1h-3" fill="none" stroke="#484644" stroke-width="1.300"/><text x="1535" y="868.500" textLength="28">70%</text><path d="M1626 859v2M1649 859v2" stroke="#484644"/></svg></footer>
</div>
</body>
</html>
```
FILE: styles.css
```css
* { box-sizing: border-box; }
body { margin: 0; width: 1680px; height: 861px; overflow: hidden; background: #fff; color: #252423; font-family: "Open Sans", "Noto Sans", sans-serif; font-size: 14px; --w: 1.3; }
body::before { content: ""; position: fixed; top: 0; left: 0; right: 0; height: 5px; background: linear-gradient(rgba(0,0,0,.17), rgba(0,0,0,0)); z-index: 5; }
h2, h3, p { margin: 0; }
svg { display: block; flex: none; }
.defs { position: absolute; }
.app { display: grid; height: 861px; grid-template-columns: 1127px 231px 226px 96px; grid-template-rows: 805px 44px 12px; }

/* report page */
.report { grid-column: 1; grid-row: 1; overflow: hidden; }
.slicers { display: flex; align-items: flex-start; height: 60px; padding-left: 8px; }
.slicer { height: 54px; border: 1px solid #3f3f3f; border-top: 0; background: #fff; box-shadow: 5px 6px 10px rgba(0,0,0,.38); padding: 0 8px 0 9px; color: #252423; }
.s1 { width: 272px; margin-right: 25px; }
.s2 { width: 259px; margin-right: 27px; }
.s3 { width: 258px; margin-right: 30px; }
.s4 { width: 234px; height: 51px; margin-top: 3px; border-top: 1px solid #3f3f3f; }
.slicer-head { display: flex; justify-content: space-between; align-items: center; height: 25px; padding: 0 3px; font: 12.500px Roboto, sans-serif; }
.slicer-head span { padding-bottom: 1px; }
.slicer-head .chev { margin-bottom: 5px; color: #605e5c; }
.chev { width: 12px; height: 7px; color: #605e5c; }
.drop { display: flex; justify-content: space-between; align-items: center; height: 24px; border: 1px solid #e8e8e8; padding: 2px 4px 0; font: 12.500px Roboto, sans-serif; color: #6b6967; }
.s4 .slicer-head { height: 25px; padding: 1px 3px 0 2px; }
.s4 .slicer-head .chev { margin-bottom: 1px; }
.s4 .slicer-head span { padding-bottom: 2px; }
.s4 .drop { height: 23px; }

.row-top { display: flex; height: 301px; }
.visual h2 { font: bold 16.500px/24px "Liberation Sans", Arial, sans-serif; letter-spacing: 1.090px; -webkit-text-stroke: .5px #252423; }
.v-cost { width: 411px; padding-top: 29px; }
.v-cost h2 { padding: 0 0 1px 5px; }
.v-uncovered { width: 377px; padding-top: 29px; }
.v-uncovered h2 { padding: 0 0 1px 1.500px; }
.chart { margin-top: 0; overflow: hidden; }
.seg { font: 12px "Open Sans", sans-serif; fill: #605e5c; }
.seg.lab { font-size: 11px; }
.seg.dark { fill: #252423; }
.tms { font: 11.500px "Liberation Serif", serif; fill: #252423; }
.tms.big { font-size: 14.500px; }
.soft { fill: #555; }
.din { font: 12.500px Roboto, sans-serif; fill: #252423; }

.v-table { width: 339px; padding-left: 5px; }
.tools { display: flex; align-items: center; height: 30px; padding: 0 0 0 235px; gap: 16px; }
.tools .gray { color: #767574; }
.dots { fill: #767574; }
.frame { position: relative; width: 331px; height: 271px; border: 2px solid #dcdcdc; padding: 0 0 0 4px; }
.frame h2 { line-height: 22px; height: 24px; margin-left: -1px; }
.h { position: absolute; background: #a3a3a3; }
.tl, .tr.h, .bl, .br { width: 12px; height: 12px; background: none; border: 0 solid #999; }
.tl { left: -3px; top: -3px; border-width: 5px 0 0 5px; }
.tr.h { display: block; right: -3px; top: -3px; border-width: 5px 5px 0 0; }
.bl { left: -3px; bottom: -3px; border-width: 0 0 5px 5px; }
.br { right: -3px; bottom: -3px; border-width: 0 5px 5px 0; }
.tc { left: 156px; top: -3px; width: 15px; height: 5px; }
.bc { left: 156px; bottom: -3px; width: 15px; height: 5px; }
.ml { left: -3px; top: 126px; width: 5px; height: 15px; }
.mr { right: -3px; top: 126px; width: 5px; height: 15px; }
.knob { position: absolute; left: 317px; top: 30px; width: 7px; height: 8px; border-radius: 4px; background: #b3b0ad; }
.tb { width: 312px; font: 13px "Liberation Serif", serif; border-top: 1px solid #bbb; }
.tb .tr { display: grid; grid-template-columns: 108px 204px; height: 20.300px; line-height: 18.500px; white-space: nowrap; border-bottom: 1px solid #d5d5d3; }
.tb .tr span { padding-left: 4px; letter-spacing: -.62px; }
.tb .tr span:first-child { text-align: right; padding: 0 4px 0 0; border-right: 1px solid #999; letter-spacing: -.2px; }
.tb .head { height: 27px; background: #252423; color: #fff; border-bottom: 1.500px solid #1a6fc4; line-height: 20px; }
.tb .tr.head span { font-size: 12.500px; letter-spacing: -.15px; }
.tb .tr.head span:first-child { font-size: 12.200px; letter-spacing: -.2px; }
.head b { display: block; width: 0; border: 4px solid transparent; border-top-color: #fff; border-bottom: 0; margin: -1px 0 0 4px; }
.dk { background: #8b8b89; color: #fff; -webkit-text-stroke: .35px #fff; }
.lt { background: #dadada; color: #6a6968; }
.sel { background: #b3b3b3; color: #252423; box-shadow: inset 3px 0 #252423; }
.tb .total { background: #666563; color: #fff; font-weight: bold; border-top: 1.500px solid #4a8fd0; border-bottom: 0; margin-top: 2px; height: 21px; line-height: 18px; }
.tb .total span:first-child { letter-spacing: -.5px; border-right-color: #777; }
.hscroll { height: 6px; width: 305px; margin: 1px 0 0 1px; border-radius: 3px; background: #b0aeac; }

.row-bottom { display: flex; height: 272px; }
.v-trend { width: 607px; padding: 1px 0 0 5px; }
.v-trend .chart { margin: 2px 0 0 -5px; }
.v-map { width: 500px; padding: 2px 0 0 3px; }
.v-map h2 { line-height: 23px; width: 490px; }
.v-map .map { margin: 3px 0 0 -1px; }
.road { font: 23px Roboto, sans-serif; }
.park { font: italic bold 22px Roboto, sans-serif; }
.club { font: bold 22px Roboto, sans-serif; }
.water { font: italic 500 30px Roboto, sans-serif; }
.town { font: bold 29px Roboto, sans-serif; }
.town .small { font-size: 25px; }
.road, .park, .club { stroke: #f7f3f0; stroke-width: 2px; paint-order: stroke; font-weight: 500; }
.pin { font: 29px "Open Sans", sans-serif; fill: #fff; }
.note { font: 22px "Liberation Sans", sans-serif; }
.page-edge { margin: 0 1px 0 3px; height: 2px; background: repeating-linear-gradient(90deg, #555 0 2px, transparent 2px 4px); }

/* filters */
.filters { grid-column: 2; grid-row: 1; border-left: 1px solid #a6a6a6; }
.filters header { display: flex; align-items: center; height: 42px; padding: 0 12px 0 15px; }
.fun { --w: 1.8; color: #111; }
.filters h3 { font: bold 19px "Liberation Serif", serif; margin-left: 10px; flex: 1; }
.eye { margin-right: 20px; }
.fsearch { display: flex; align-items: center; gap: 17px; margin: 10px 15px 5px 10px; height: 38px; border: 1px solid #a6a6a6; border-radius: 2px; padding: 0 0 2px 12px; font-size: 15px; }
.fbody { border-top: 1px solid #a6a6a6; padding: 0 10px 0 10px; }
.fh { display: flex; justify-content: space-between; padding-right: 4px; height: 52px; align-items: center; font: 15px "Liberation Serif", serif; }
.fh span { padding-top: 6px; letter-spacing: -.05px; }
.fh i { font-style: normal; letter-spacing: 1.500px; padding-top: 12px; }
.card { height: 57px; margin-bottom: 8px; border: 1px solid #c8c6c4; border-radius: 2px; padding: 5px 11px; font-size: 14px; line-height: 22px; }
.card.add { height: 54px; margin: 0 0 12.500px; font: 15px/52px "Liberation Serif", serif; text-align: center; padding: 0; }
.card + .card.add { margin-top: -1px; }

/* page tabs */
.tabs { grid-column: 1 / 3; grid-row: 2; display: flex; background: #f3f2f1; align-items: stretch; }
.dev { width: 30px; margin-left: 13px; padding: 8px 1px 0; border-bottom: 3px solid transparent; height: 38px; }
.on.dev { border-bottom-color: #117865; }
.ph { margin-left: 31px; padding: 5px 0 0; width: 42px; }
.arr { margin: 15px 7px 0 0; }
.tab { width: 96px; background: #fff; border-left: 1px solid #c8c6c4; text-align: center; line-height: 45px; font-size: 14px; }
.tab.cur { width: 94px; border-left-color: #8a8886; font-weight: 600; border-bottom: 5px solid #117865; letter-spacing: -.5px; }
.addp { width: 50px; background: #117865; display: flex; align-items: center; justify-content: center; padding-bottom: 3px; }

/* visualizations */
.viz { grid-column: 3; grid-row: 1 / 3; background: #f3f2f1; border-left: 1px solid #d2d0ce; }
.viz header { display: flex; justify-content: space-between; align-items: center; height: 47px; padding: 0 9px 0 11px; }
.viz h3, .data h3 { font: 600 18.500px "Open Sans", sans-serif; letter-spacing: 0; }
.build { padding-left: 11px; font-weight: 600; line-height: 20px; letter-spacing: -.1px; height: 24px; }
.modes { display: flex; justify-content: space-between; padding: 0 10px; }
.mode { width: 40px; height: 40px; display: flex; align-items: center; justify-content: center; border-radius: 2px; }
.mode.on { background: #d2d0ce; }
.mode:nth-child(2) { margin-left: 5px; }
.notch { margin-top: 5px; }
.gallery { display: grid; grid-template-columns: repeat(6, 24px); grid-auto-rows: 24px; gap: 11px; padding: 13px 0 0 14px; }
.gallery svg { width: 24px; height: 24px; overflow: visible; }
.w { fill: #fff; stroke: #797775; stroke-width: 1.100; }
.g { fill: #c8c6c4; stroke: #797775; stroke-width: 1.100; }
.g2 { fill: #eee; stroke: #a19f9d; stroke-width: 1.300; }
.b { fill: #83bdeb; stroke: #1a6fb8; stroke-width: 1.200; }
.k { fill: none; stroke: #3b3a39; stroke-width: 1.400; }
.wk { fill: #fff; stroke: #3b3a39; stroke-width: 1.400; }
.gk { fill: #fff; stroke: #8a8886; stroke-width: 1.200; }
.l { fill: none; stroke: #1a7bd0; stroke-width: 1.500; }
.o { fill: #f0a050; stroke: #df6b0e; }
.z { fill: #ffd76a; stroke: #df6b0e; stroke-width: 1.200; }
.num { font: 11px "Open Sans", sans-serif; fill: #2f8ad3; letter-spacing: -.7px; }
.lang { font: bold 20px "Open Sans", sans-serif; fill: #2787c6; }
.picked { outline: 1px solid #252423; outline-offset: 3px; }
.gm { margin: 18px 0 0 16px; fill: #252423; }
.wells { margin-top: 22px; border-top: 1px solid #dddbd9; padding: 0 7px 0 5px; color: #252423; }
.wl { padding-left: 11px; line-height: 20px; padding-top: 12px; height: 38px; }
.well { background: #fff; border: 1px dashed #c2c0be; border-radius: 2px; height: 75px; padding: 4px 3px; }
.fld { display: flex; align-items: center; height: 28px; margin-bottom: 2px; background: #edebe9; border: 1px solid #c0bebc; border-radius: 2px; padding: 0 4px 0 5px; }
.fld span { flex: 1; letter-spacing: .05px; }
.fld .c { margin-right: 7px; }
.tt { font-weight: 600; color: #484644; padding-top: 14px; height: 44px; letter-spacing: -.2px; }
.keep { display: flex; justify-content: space-between; align-items: center; padding: 0 20px 0 11px; height: 20px; margin-bottom: 13px; letter-spacing: 0; }
.tog { display: flex; align-items: center; gap: 3px; width: 40px; height: 20px; border: 1px solid #797775; border-radius: 10px; padding-left: 5px; font-size: 11px; background: #fff; color: #605e5c; }
.tog i { width: 10px; height: 10px; border-radius: 5px; background: #605e5c; }
.drag { height: 32px; padding: 0 11px; line-height: 31px; letter-spacing: .1px; }

/* data */
.data { grid-column: 4; grid-row: 1 / 3; background: #f3f2f1; border-left: 1px solid #d2d0ce; overflow: hidden; }
.data h3 { padding: 12px 0 0 11px; line-height: 24px; height: 56px; }
.dsearch { display: flex; align-items: center; gap: 8px; width: 140px; height: 30px; margin-left: 5px; padding-left: 16px; background: #fff; border: 1px solid #c8c6c4; border-bottom-color: #605e5c; border-radius: 4px; font-size: 15px; color: #605e5c; letter-spacing: -.2px; }
.list { margin-top: 10px; height: 743px; overflow: hidden; }
.list .it:first-child { margin-top: -9px; }
.it { display: flex; align-items: center; height: 30px; width: 160px; padding-left: 55px; }
.cb { width: 15px; height: 15px; border: 1px solid #797775; border-radius: 2px; flex: none; }
.cb.y { background: #117865; border-color: #117865; }
.cb svg { width: 13px; height: 13px; }
.sg { width: 16px; height: 16px; margin-left: 10px; }
.ic { width: 18px; height: 18px; margin-left: 9px; }
.r { width: 8px; height: 14px; }
.ex { padding-left: 38px; }
.ex .r { margin-right: 9px; }
.t { padding-left: 19px; position: relative; font-size: 13.500px; }
.ti { width: 18px; height: 18px; margin: 0 5px 0 9px; }
.t .dn { width: 14px; height: 8px; margin: 0 -3px 0 -3px; }
.badge { position: absolute; left: 44px; top: 15px; width: 14px; height: 14px; }

.status { grid-column: 1 / 5; grid-row: 3; background: #f3f2f1; border-top: 1px solid #dddbd9; }
.status text { font: 14.500px "Open Sans", sans-serif; fill: #484644; }
```
